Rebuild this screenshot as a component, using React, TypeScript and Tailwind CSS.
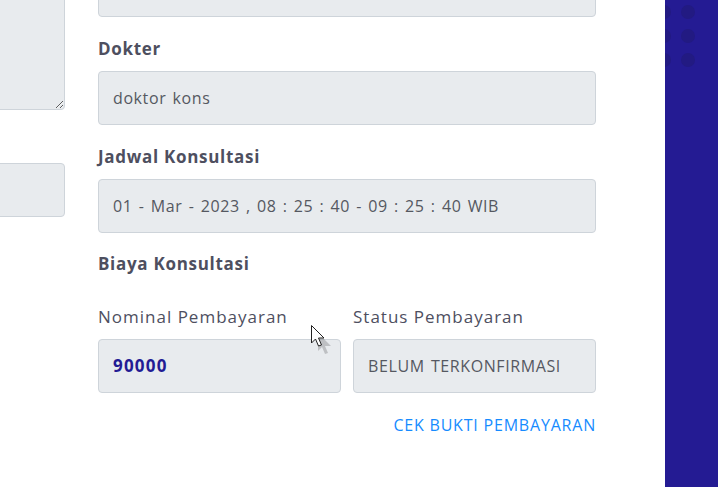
import React from 'react'

const font = { fontFamily: '"Open Sans", "Liberation Sans", sans-serif' }

function Label({ children }: { children: React.ReactNode }) {
  return (
    <div className="mt-5 mb-[10px] h-6 leading-6 text-[17px] tracking-[0.7px] font-bold text-[#4e4f5f]">
      {children}
    </div>
  )
}

function Field({ value, className = '' }: { value: string; className?: string }) {
  return (
    <div
      className={`h-[54px] flex items-center px-[14px] bg-[#e8ebee] border border-[#ced4da] rounded-[4px] text-[16px] tracking-[0.6px] [word-spacing:1.5px] text-[#555861] ${className}`}
    >
      {value}
    </div>
  )
}

function Cursor() {
  return (
    <svg
      className="absolute left-[310px] top-[324px]"
      width="22"
      height="30"
      viewBox="0 0 22 30"
    >
      <path d="M5 7 L5 25 L9 21 L12 28 L15 27 L12 20 L18 20 Z" fill="#000" opacity="0.18" transform="translate(3 2)" />
      <path d="M1.5 1.5 L1.5 19 L5.5 15 L8.5 22 L11.5 21 L8.5 14 L14 14 Z" fill="#fff" stroke="#222" strokeWidth="1" strokeLinejoin="round" />
    </svg>
  )
}

export default function App() {
  return (
    <div className="relative flex w-[718px] h-[487px] overflow-hidden bg-white" style={font}>
      <div className="w-[65px] shrink-0">
        <textarea
          readOnly
          className="block ml-[-40px] mt-[-40px] w-[105px] h-[150px] bg-[#e8ebee] border border-[#ced4da] rounded-[4px] resize-y outline-none"
        />
        <div className="ml-[-40px] mt-[53px] w-[105px] h-[54px] bg-[#e8ebee] border border-[#ced4da] rounded-[4px]" />
      </div>

      <div className="ml-[33px] w-[498px] shrink-0">
        <Field value="gigi" className="mt-[-37px]" />

        <Label>Dokter</Label>
        <Field value="doktor kons" />

        <Label>Jadwal Konsultasi</Label>
        <Field value="01 - Mar - 2023 , 08 : 25 : 40 - 09 : 25 : 40 WIB" />

        <div className="mt-[19px] h-6 leading-6 text-[17px] tracking-[0.7px] font-bold text-[#4e4f5f]">
          Biaya Konsultasi
        </div>

        <div className="mt-[29px] flex gap-3">
          <div className="flex-1">
            <div className="h-6 leading-6 text-[17px] tracking-[1px] text-[#4e4f5f] mb-[10px]">Nominal Pembayaran</div>
            <Field value="90000" className="!text-[#231b94] font-bold !text-[17px] !tracking-[1.2px]" />
          </div>
          <div className="flex-1">
            <div className="h-6 leading-6 text-[17px] tracking-[1px] text-[#4e4f5f] mb-[10px]">Status Pembayaran</div>
            <Field value="BELUM TERKONFIRMASI" />
          </div>
        </div>

        <div className="mt-5 flex justify-end">
          <a className="text-[16px] leading-6 tracking-[0.8px] text-[#168bff] cursor-pointer">CEK BUKTI PEMBAYARAN</a>
        </div>
      </div>

      <div className="ml-auto w-[53px] shrink-0 bg-[#241b93] relative overflow-hidden">
        <div className="absolute left-[-8px] top-[5px] grid grid-cols-2 gap-x-[10px] gap-y-[10px]">
          {[0, 1, 2, 3, 4, 5].map((i) => (
            <div key={i} className="w-[14px] h-[14px] rounded-full bg-[#221a82]" />
          ))}
        </div>
      </div>

      <Cursor />
    </div>
  )
}
